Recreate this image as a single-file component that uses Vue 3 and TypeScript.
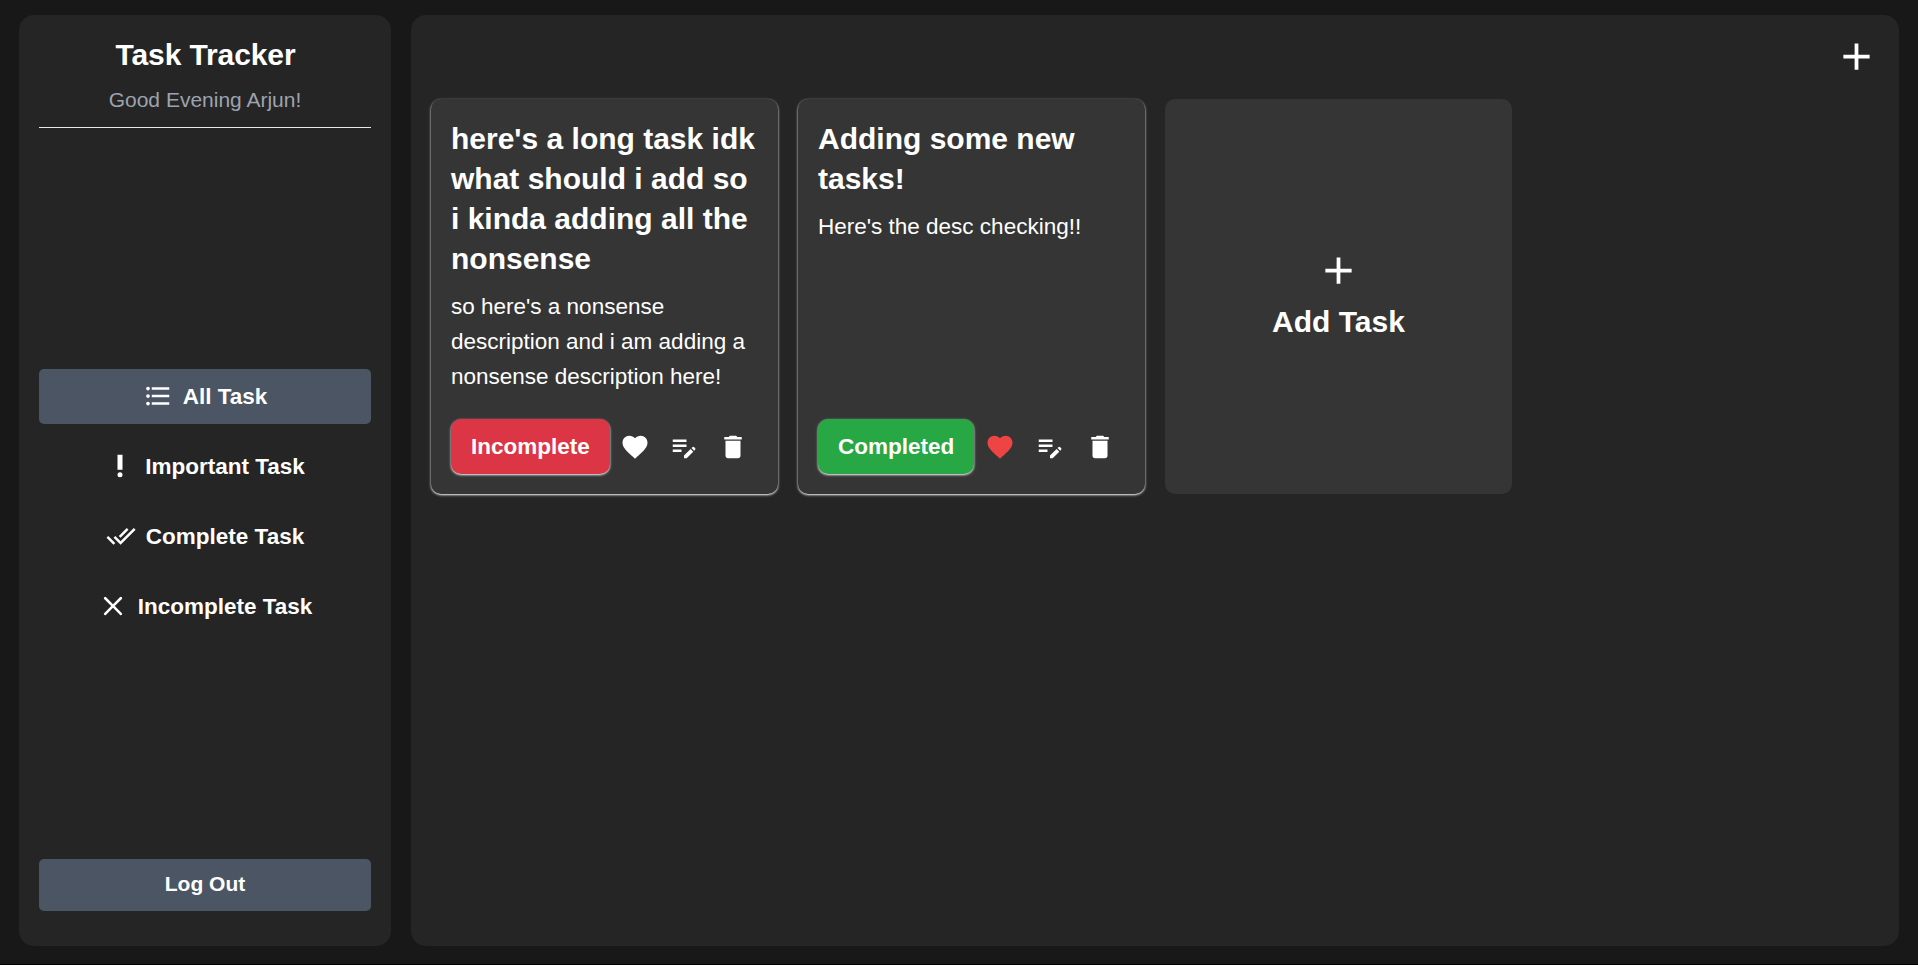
<script setup lang="ts">
interface Filter {
  label: string
  icon: string
  active?: boolean
}

interface Task {
  title: string
  desc: string
  completed: boolean
  important: boolean
}

const icons = {
  list: 'M4 10.5c-.83 0-1.5.67-1.5 1.5s.67 1.5 1.5 1.5 1.5-.67 1.5-1.5-.67-1.5-1.5-1.5zm0-6c-.83 0-1.5.67-1.5 1.5S3.17 7.5 4 7.5 5.5 6.83 5.5 6 4.83 4.5 4 4.5zm0 12c-.83 0-1.5.68-1.5 1.5s.68 1.5 1.5 1.5 1.5-.68 1.5-1.5-.67-1.5-1.5-1.5zM7 19h14v-2H7v2zm0-6h14v-2H7v2zm0-8v2h14V5H7z',
  important: 'M10 19a2 2 0 1 0 4 0a2 2 0 1 0-4 0zM10 3h4v12h-4z',
  done: 'M18 7l-1.41-1.41-6.34 6.34 1.41 1.41L18 7zm4.24-1.41L11.66 16.17 7.48 12l-1.41 1.41L11.66 19l12-12-1.42-1.41zM.41 13.41L6 19l1.41-1.41L1.83 12 .41 13.41z',
  cross: 'M18.93 6.5a1.02 1.02 0 1 0-1.43-1.43L12 10.57 6.5 5.07A1.02 1.02 0 1 0 5.07 6.5l5.5 5.5-5.5 5.5a1.02 1.02 0 1 0 1.43 1.43l5.5-5.5 5.5 5.5a1.02 1.02 0 1 0 1.43-1.43l-5.5-5.5z',
  heart: 'M12 21.35l-1.45-1.32C5.4 15.36 2 12.28 2 8.5 2 5.42 4.42 3 7.5 3c1.74 0 3.41.81 4.5 2.09C13.09 3.81 14.76 3 16.5 3 19.58 3 22 5.42 22 8.5c0 3.78-3.4 6.86-8.55 11.54L12 21.35z',
  edit: 'M3 10h11v2H3v-2zm0-2h11V6H3v2zm0 8h7v-2H3v2zm15.01-3.13l.71-.71a.996.996 0 0 1 1.41 0l.71.71c.39.39.39 1.02 0 1.41l-.71.71-2.12-2.12zm-.71.71l-5.3 5.3V21h2.12l5.3-5.3-2.12-2.12z',
  trash: 'M6 19c0 1.1.9 2 2 2h8c1.1 0 2-.9 2-2V7H6v12zM19 4h-3.5l-1-1h-5l-1 1H5v2h14V4z',
  plus: 'M19 13h-6v6h-2v-6H5v-2h6V5h2v6h6v2z',
}

const filters: Filter[] = [
  { label: 'All Task', icon: icons.list, active: true },
  { label: 'Important Task', icon: icons.important },
  { label: 'Complete Task', icon: icons.done },
  { label: 'Incomplete Task', icon: icons.cross },
]

const tasks: Task[] = [
  {
    title: "here's a long task idk what should i add so i kinda adding all the nonsense",
    desc: "so here's a nonsense description and i am adding a nonsense description here!",
    completed: false,
    important: false,
  },
  {
    title: 'Adding some new tasks!',
    desc: "Here's the desc checking!!",
    completed: true,
    important: true,
  },
]
</script>

<template>
  <div class="app">
    <aside class="sidebar">
      <header class="brand">
        <h1>Task Tracker</h1>
        <p>Good Evening Arjun!</p>
      </header>
      <nav class="nav">
        <button v-for="f in filters" :key="f.label" class="nav-item" :class="{ active: f.active }">
          <svg class="icon" viewBox="0 0 24 24"><path :d="f.icon" /></svg>
          <span>{{ f.label }}</span>
        </button>
      </nav>
      <button class="logout">Log Out</button>
    </aside>

    <main class="board">
      <div class="toolbar">
        <button class="bare" aria-label="Add task">
          <svg class="icon-lg" viewBox="0 0 24 24"><path :d="icons.plus" /></svg>
        </button>
      </div>
      <section class="grid">
        <article v-for="t in tasks" :key="t.title" class="card task">
          <div>
            <h2>{{ t.title }}</h2>
            <p class="desc">{{ t.desc }}</p>
          </div>
          <div class="actions">
            <button class="status" :class="{ completed: t.completed }">
              {{ t.completed ? 'Completed' : 'Incomplete' }}
            </button>
            <button class="action heart" :class="{ liked: t.important }" aria-label="Important">
              <svg class="icon" viewBox="0 0 24 24"><path :d="icons.heart" /></svg>
            </button>
            <button class="action" aria-label="Edit">
              <svg class="icon" viewBox="0 0 24 24"><path :d="icons.edit" /></svg>
            </button>
            <button class="action" aria-label="Delete">
              <svg class="icon" viewBox="0 0 24 24"><path :d="icons.trash" /></svg>
            </button>
          </div>
        </article>
        <button class="card add">
          <svg class="icon-lg" viewBox="0 0 24 24"><path :d="icons.plus" /></svg>
          <span>Add Task</span>
        </button>
      </section>
    </main>
  </div>
</template>

<style>
body {
  margin: 0;
  background: #181818;
}
</style>

<style scoped>
.app {
  box-sizing: border-box;
  display: flex;
  gap: 20px;
  height: 965px;
  padding: 15px 19px 18px;
  border-bottom: 1px solid #000;
  background: #181818;
  color: #fff;
  font-family: "Liberation Sans", Arial, sans-serif;
}

h1,
h2,
p {
  margin: 0;
}

button {
  margin: 0;
  padding: 0;
  border: 0;
  background: none;
  color: inherit;
  font: inherit;
}

svg {
  display: block;
  flex-shrink: 0;
  fill: currentColor;
}

.icon {
  width: 30px;
  height: 30px;
}

.icon-lg {
  width: 45px;
  height: 45px;
}

.sidebar {
  box-sizing: border-box;
  display: flex;
  flex-direction: column;
  width: 372px;
  padding: 20px 20px 35px;
  border-radius: 15px;
  background: #252525;
}

.brand {
  padding-bottom: 12px;
  border-bottom: 1px solid #e5e7eb;
  text-align: center;
}

.brand h1 {
  padding-left: 1px;
  font-size: 30px;
  line-height: 40px;
  letter-spacing: -0.1px;
}

.brand p {
  margin-top: 10px;
  color: #9ca3af;
  font-size: 21px;
  line-height: 30px;
}

.nav {
  display: flex;
  flex-direction: column;
  gap: 15px;
  margin-top: 241px;
}

.nav-item {
  display: flex;
  align-items: center;
  justify-content: center;
  gap: 10px;
  height: 55px;
  border-radius: 5px;
  font-size: 22.5px;
  font-weight: 700;
  line-height: 35px;
}

.nav-item .icon {
  margin-bottom: 1px;
}

.nav-item.active,
.logout {
  background: #4b5563;
}

.logout {
  height: 52px;
  margin-top: auto;
  padding-bottom: 2px;
  border-radius: 5px;
  font-size: 21px;
  font-weight: 700;
  line-height: 30px;
}

.board {
  box-sizing: border-box;
  flex: 1;
  padding: 19px 20px 20px;
  border-radius: 15px;
  background: #252525;
}

.toolbar {
  display: flex;
  justify-content: flex-end;
  margin-bottom: 20px;
}

.grid {
  display: grid;
  grid-template-columns: repeat(4, 1fr);
  gap: 20px;
}

.card {
  box-sizing: border-box;
  min-height: 395px;
  padding: 20px;
  border-radius: 10px;
  background: #353535;
}

.task {
  display: flex;
  flex-direction: column;
  justify-content: space-between;
  box-shadow: 0 1px 2.5px #fff;
}

.task h2 {
  font-size: 30px;
  line-height: 40px;
}

.desc {
  margin-top: 10px;
  font-size: 22.5px;
  line-height: 35px;
}

.actions {
  display: flex;
  align-items: center;
}

.status {
  flex-shrink: 0;
  padding: 10px 20px;
  border-radius: 10px;
  background: #dc3545;
  box-shadow: 0 1px 2.5px #fff;
  font-size: 22.5px;
  font-weight: 700;
  line-height: 35px;
}

.status.completed {
  background: #28a745;
}

.action {
  display: flex;
  flex: 1;
  justify-content: center;
}

.heart {
  padding-left: 1px;
}

.action.liked {
  color: #ef4444;
}

.add {
  display: flex;
  flex-direction: column;
  align-items: center;
  justify-content: center;
  gap: 9px;
  padding-bottom: 23px;
  font-size: 30px;
  font-weight: 700;
  line-height: 40px;
}
</style>
